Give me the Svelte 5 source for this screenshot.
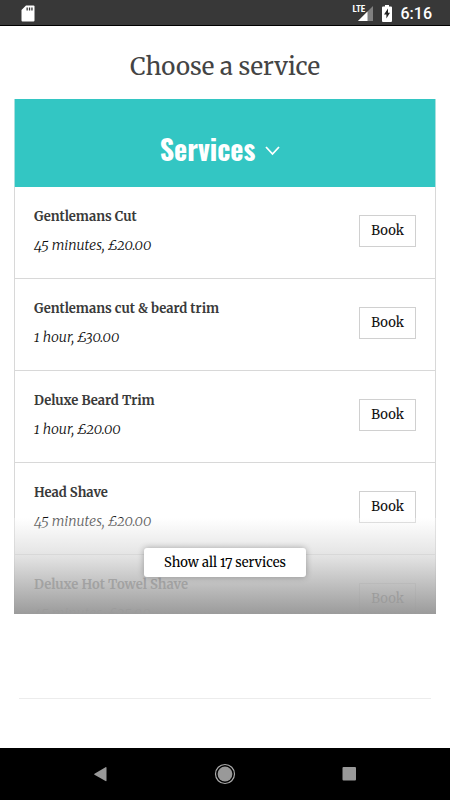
<script>
    // Services offered by the shop, only the first few fit before "show all".
    let services = $state([
        { name: 'Gentlemans Cut', length: '45 minutes', price: '£20.00' },
        { name: 'Gentlemans cut & beard trim', length: '1 hour', price: '£30.00' },
        { name: 'Deluxe Beard Trim', length: '1 hour', price: '£20.00' },
        { name: 'Head Shave', length: '45 minutes', price: '£20.00' },
        { name: 'Deluxe Hot Towel Shave', length: '45 minutes', price: '£25.00' }
    ]);
    const total = 17;

    let open = $state(true);
    let showAll = $state(false);
</script>

<div class="screen">
    <header class="status-bar">
        <svg class="sd" width="14" height="18" viewBox="0 0 14 18">
            <path d="M5 0.500h7.500a1 1 0 0 1 1 1v14a1 1 0 0 1-1 1H1.500a1 1 0 0 1-1-1V5z" fill="#fff" />
            <path d="M5.500 2.500h1.300v3H5.500zM7.900 2.500h1.300v3H7.900zM10.300 2.500h1.300v3h-1.300z" fill="#383838" />
        </svg>
        <div class="signal">
            <span class="lte">LTE</span>
            <svg width="15" height="15" viewBox="0 0 15 15">
                <path d="M15 0v15H0z" fill="#808080" />
                <path d="M9.500 5.500V15H0z" fill="#fff" />
            </svg>
        </div>
        <svg width="10" height="17" viewBox="0 0 10 17">
            <path d="M3 0h4v1.500h2a1 1 0 0 1 1 1V16a1 1 0 0 1-1 1H1a1 1 0 0 1-1-1V2.500a1 1 0 0 1 1-1h2z" fill="#fff" />
            <path d="M6 3.500L2 9.500h2.400v4L8 7.700H6z" fill="#222" />
        </svg>
        <time>6:16</time>
    </header>

    <main>
        <h1>Choose a service</h1>

        <section class="card" class:collapsed={!showAll}>
            <button class="card-header" aria-expanded={open} onclick={() => (open = !open)}>
                <span>Services</span>
                <svg width="15" height="10" viewBox="0 0 15 10">
                    <path d="M1 1l6.500 7L14 1" fill="none" stroke="#fff" stroke-width="1.800" />
                </svg>
            </button>

            {#if open}
                <ul>
                    {#each services as service}
                        <li>
                            <div class="info">
                                <h2>{service.name}</h2>
                                <p>{service.length}, {service.price}</p>
                            </div>
                            <button class="book" aria-label="Book {service.name}">Book</button>
                        </li>
                    {/each}
                </ul>
            {/if}

            {#if open && !showAll}
                <div class="fade">
                    <button class="show-all" onclick={() => (showAll = true)}>Show all {total} services</button>
                </div>
            {/if}
        </section>

        <hr />
    </main>

    <nav>
        <button aria-label="Back">
            <svg width="22" height="22" viewBox="0 0 22 22">
                <path d="M16.500 5v12.500q0 1-1 .5L4.500 11.800q-.8-.5 0-1L15.500 4.200q1-.4 1 .8z" fill="#999" />
            </svg>
        </button>
        <button aria-label="Home">
            <svg width="22" height="22" viewBox="0 0 22 22">
                <circle cx="11" cy="11" r="9.500" fill="none" stroke="#aaa" stroke-width="1.200" />
                <circle cx="11" cy="11" r="7.400" fill="#999" />
            </svg>
        </button>
        <button aria-label="Recent apps">
            <svg width="22" height="22" viewBox="0 0 22 22">
                <rect x="4.500" y="4" width="13.500" height="13.500" rx="1" fill="#999" />
            </svg>
        </button>
    </nav>
</div>

<style>
    :global(body) {
        margin: 0;
        background: #fff;
    }

    .screen {
        display: flex;
        flex-direction: column;
        min-height: 100vh;
        font-family: Merriweather, 'DejaVu Serif Condensed', 'DejaVu Serif', serif;
        font-variant-numeric: oldstyle-nums;
        color: #3a3a3a;
    }

    button {
        font: inherit;
        font-variant-numeric: inherit;
        cursor: pointer;
    }

    /* Android status bar */
    .status-bar {
        display: flex;
        align-items: center;
        gap: 9px;
        box-sizing: border-box;
        height: 26px;
        padding: 2px 18px 0 21px;
        background: #383838;
        border-bottom: 1px solid #000;
        color: #fff;
    }

    .sd {
        margin-right: auto;
    }

    .signal {
        position: relative;
        display: flex;
        padding-left: 5px;
    }

    .lte {
        position: absolute;
        top: -2px;
        left: 0;
        font: bold 9px/10px 'Roboto Condensed', 'Liberation Sans Narrow', sans-serif;
    }

    time {
        font: 500 16px/20px Roboto, sans-serif;
    }

    main {
        flex: 1;
        padding: 0 14px;
    }

    h1 {
        margin: 0;
        padding: 23px 0 14px;
        font-size: 24px;
        line-height: 36px;
        font-weight: 400;
        text-align: center;
        color: #444;
    }

    .card {
        position: relative;
    }

    .card.collapsed {
        max-height: 515px;
        overflow: hidden;
    }

    .card-header {
        display: flex;
        align-items: center;
        justify-content: center;
        gap: 10px;
        width: 100%;
        height: 88px;
        padding: 12px 10px 0 0;
        border: 1px solid #a8dfde;
        border-width: 0 1px;
        background: #33c6c3;
        color: #fff;
        font: bold 28px/36px Oswald, 'Liberation Sans Narrow', 'Liberation Sans', sans-serif;
    }

    .card-header svg {
        margin-top: 4px;
    }

    ul {
        list-style: none;
        margin: 0;
        padding: 0;
        border: 1px solid #d8d8d8;
        border-width: 0 1px;
    }

    li {
        display: flex;
        align-items: center;
        justify-content: space-between;
        padding: 16px 19px 19px;
        border-bottom: 1px solid #d8d8d8;
    }

    h2,
    p {
        margin: 0;
        line-height: 28px;
    }

    h2 {
        font-size: 13px;
        font-weight: bold;
    }

    p {
        font-size: 14px;
        font-weight: 300;
        font-style: italic;
        color: #111;
    }

    .book {
        padding: 0 11px;
        border: 1px solid #d0d0d0;
        background: #fff;
        color: #111;
        font-size: 13px;
        line-height: 30px;
    }

    /* Grey fade over the rows that are cut off */
    .fade {
        position: absolute;
        inset: auto 0 0;
        display: flex;
        align-items: center;
        justify-content: center;
        height: 96px;
        padding-bottom: 8px;
        box-sizing: border-box;
        background: linear-gradient(rgba(255, 255, 255, 0.3), rgba(215, 215, 215, 0.7) 40%, rgb(155, 155, 155));
    }

    .show-all {
        padding: 0 20px;
        border: 0;
        border-radius: 3px;
        background: #fff;
        color: #000;
        font-size: 13px;
        line-height: 29px;
        box-shadow: 0 0 6px rgba(0, 0, 0, 0.3);
    }

    hr {
        margin: 84px 5px 48px;
        border: 0;
        border-top: 1px solid #ececec;
    }

    /* Android navigation bar */
    nav {
        display: flex;
        align-items: center;
        justify-content: center;
        gap: 102px;
        height: 52px;
        background: #000;
    }

    nav button {
        display: flex;
        padding: 0;
        border: 0;
        background: none;
    }
</style>
